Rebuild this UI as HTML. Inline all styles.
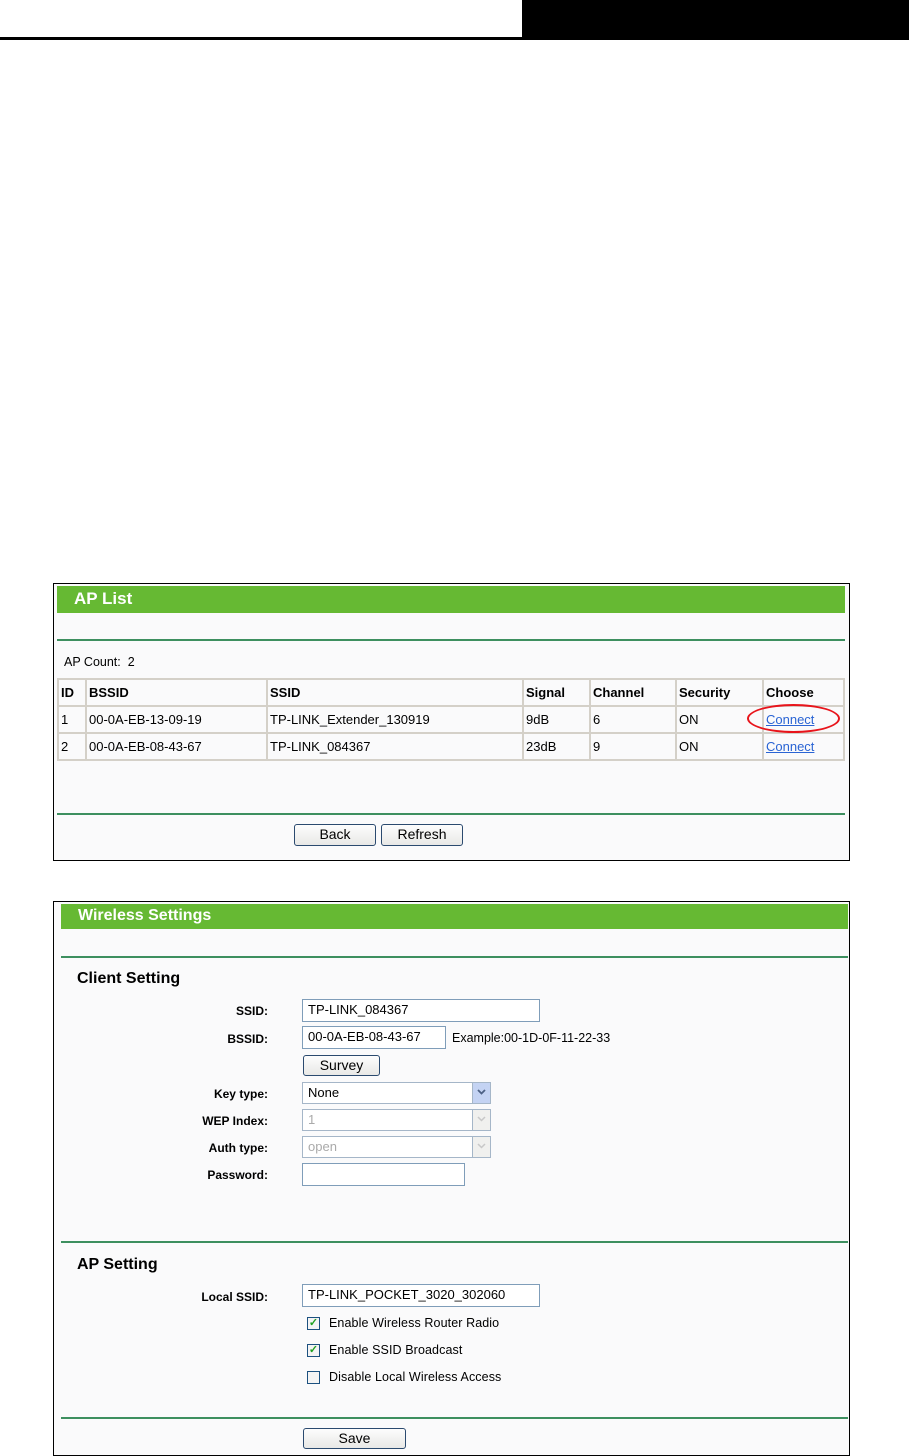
<!DOCTYPE html>
<html><head><meta charset="utf-8"><style>
*{margin:0;padding:0;box-sizing:border-box}
body{width:909px;height:1456px;background:#fff;position:relative;font-family:"Liberation Sans",Arial,sans-serif;font-size:13px;color:#000;overflow:hidden}
.a{position:absolute}
.box{position:absolute;border:1px solid #000;background:#fafafb}
.green{position:absolute;background:#66b933;color:#fff;font-weight:bold;font-size:17px;padding-left:17px}
.hl{position:absolute;height:2px;background:#3d8f5f}
table{border-collapse:collapse;position:absolute}
td{border:2px solid #d4d0c8;padding:0 2px 1px;height:27px;font-size:13px;vertical-align:middle}
th{border:2px solid #d4d0c8;padding:0 2px 1px;height:27px;font-size:13px;text-align:left}
.btn{position:absolute;border:1px solid #2b4a6f;border-radius:3px;background:linear-gradient(#fdfdfd,#e8e8e6);font-size:14px;text-align:center;line-height:19px}
.lbl{position:absolute;font-weight:bold;font-size:12px;text-align:right;width:200px;left:68px}
.inp{position:absolute;border:1px solid #7f9db9;background:#fff;font-size:13px;padding-left:5px;line-height:20px;height:23px}
.sel{position:absolute;border:1px solid #a5b6c8;background:#fff;font-size:13px;padding-left:5px;line-height:20px;height:22px;width:189px;left:302px}
.arr{position:absolute;right:0;top:0;width:18px;height:20px;background:#c4d3f3;border-left:1px solid #a5b6c8}
.arr svg{position:absolute;left:4px;top:6px}
.dis{color:#aaa}
.dis .arr{background:#f0f0ee}
.cb{position:absolute;left:307px;width:13px;height:13px;border:1px solid #1c5180;background:#f4f4f4;color:#21a121;font-size:11px;line-height:11px;text-align:center;font-weight:bold}
.ct{position:absolute;left:329px;font-size:12.5px;letter-spacing:.1px}
a{color:#2a64d4}
</style></head><body>
<div class="a" style="left:522px;top:0;width:387px;height:40px;background:#000"></div>
<div class="a" style="left:0;top:37px;width:522px;height:3px;background:#000"></div>

<div class="box" style="left:53px;top:583px;width:797px;height:278px"></div>
<div class="green" style="left:57px;top:586px;width:788px;height:27px;line-height:26px">AP List</div>
<div class="hl" style="left:57px;top:639px;width:788px"></div>
<div class="a" style="left:64px;top:655px;font-size:12.5px">AP Count:&nbsp; 2</div>
<table style="left:57px;top:678px;width:788px">
<tr><th style="width:28px">ID</th><th style="width:181px">BSSID</th><th style="width:256px">SSID</th><th style="width:67px">Signal</th><th style="width:86px">Channel</th><th style="width:87px">Security</th><th>Choose</th></tr>
<tr><td>1</td><td>00-0A-EB-13-09-19</td><td>TP-LINK_Extender_130919</td><td>9dB</td><td>6</td><td>ON</td><td><a href="#">Connect</a></td></tr>
<tr><td>2</td><td>00-0A-EB-08-43-67</td><td>TP-LINK_084367</td><td>23dB</td><td>9</td><td>ON</td><td><a href="#">Connect</a></td></tr>
</table>
<div class="a" style="left:747px;top:704px;width:93px;height:29px;border:2px solid #e8141b;border-radius:50%"></div>
<div class="hl" style="left:57px;top:813px;width:788px"></div>
<div class="btn" style="left:294px;top:824px;width:82px;height:22px">Back</div>
<div class="btn" style="left:381px;top:824px;width:82px;height:22px">Refresh</div>

<div class="box" style="left:53px;top:901px;width:797px;height:555px"></div>
<div class="green" style="left:61px;top:904px;width:787px;height:25px;line-height:24px;font-size:16px">Wireless Settings</div>
<div class="hl" style="left:61px;top:956px;width:787px"></div>
<div class="a" style="left:77px;top:970px;font-weight:bold;font-size:16px">Client Setting</div>
<div class="lbl" style="top:1004px">SSID:</div>
<div class="inp" style="left:302px;top:999px;width:238px">TP-LINK_084367</div>
<div class="lbl" style="top:1032px">BSSID:</div>
<div class="inp" style="left:302px;top:1026px;width:144px">00-0A-EB-08-43-67</div>
<div class="a" style="left:452px;top:1031px;font-size:12.5px">Example:00-1D-0F-11-22-33</div>
<div class="btn" style="left:303px;top:1055px;width:77px;height:21px">Survey</div>
<div class="lbl" style="top:1087px">Key type:</div>
<div class="sel" style="top:1082px">None<div class="arr"><svg width="9" height="6"><path d="M1 1L4.5 4.5L8 1" stroke="#4d6185" stroke-width="1.8" fill="none"/></svg></div></div>
<div class="lbl" style="top:1114px">WEP Index:</div>
<div class="sel dis" style="top:1109px">1<div class="arr"><svg width="9" height="6"><path d="M1 1L4.5 4.5L8 1" stroke="#c8c8c8" stroke-width="1.5" fill="none"/></svg></div></div>
<div class="lbl" style="top:1141px">Auth type:</div>
<div class="sel dis" style="top:1136px">open<div class="arr"><svg width="9" height="6"><path d="M1 1L4.5 4.5L8 1" stroke="#c8c8c8" stroke-width="1.5" fill="none"/></svg></div></div>
<div class="lbl" style="top:1168px">Password:</div>
<div class="inp" style="left:302px;top:1163px;width:163px"></div>
<div class="hl" style="left:61px;top:1241px;width:787px"></div>
<div class="a" style="left:77px;top:1256px;font-weight:bold;font-size:16px">AP Setting</div>
<div class="lbl" style="top:1290px">Local SSID:</div>
<div class="inp" style="left:302px;top:1284px;width:238px">TP-LINK_POCKET_3020_302060</div>
<div class="cb" style="top:1317px">&#10003;</div><div class="ct" style="top:1316px">Enable Wireless Router Radio</div>
<div class="cb" style="top:1344px">&#10003;</div><div class="ct" style="top:1343px">Enable SSID Broadcast</div>
<div class="cb" style="top:1371px"></div><div class="ct" style="top:1370px">Disable Local Wireless Access</div>
<div class="hl" style="left:61px;top:1417px;width:787px"></div>
<div class="btn" style="left:303px;top:1428px;width:103px;height:21px">Save</div>
</body></html>
